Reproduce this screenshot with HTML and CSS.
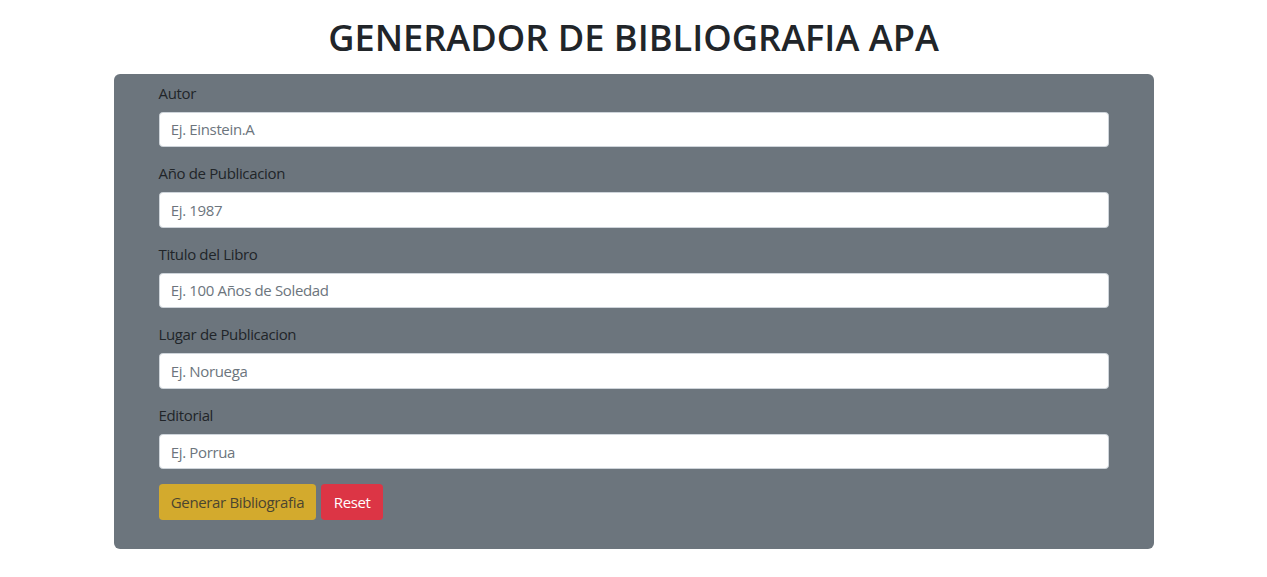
FILE: index.html
```html
<!DOCTYPE html>
<html lang="es">
<head>
<meta charset="utf-8">
<title>Generador de Bibliografia APA</title>
<link rel="stylesheet" href="styles.css">
</head>
<body>
<div class="container">
  <h1 class="title">GENERADOR DE BIBLIOGRAFIA APA</h1>
  <form class="card">
    <div class="form-group">
      <label class="label" for="autor">Autor</label>
      <input class="input" id="autor" type="text" placeholder="Ej. Einstein.A">
    </div>
    <div class="form-group">
      <label class="label" for="anio">Año de Publicacion</label>
      <input class="input" id="anio" type="text" placeholder="Ej. 1987">
    </div>
    <div class="form-group">
      <label class="label" for="titulo">Titulo del Libro</label>
      <input class="input" id="titulo" type="text" placeholder="Ej. 100 Años de Soledad">
    </div>
    <div class="form-group">
      <label class="label" for="lugar">Lugar de Publicacion</label>
      <input class="input" id="lugar" type="text" placeholder="Ej. Noruega">
    </div>
    <div class="form-group">
      <label class="label" for="editorial">Editorial</label>
      <input class="input" id="editorial" type="text" placeholder="Ej. Porrua">
    </div>
    <div class="actions">
      <button type="button" class="btn btn-warning">Generar Bibliografia</button>
      <button type="reset" class="btn btn-danger">Reset</button>
    </div>
  </form>
</div>
</body>
</html>
```
FILE: styles.css
```css
* { box-sizing: border-box; }
html, body { margin: 0; padding: 0; }
body {
  background: #ffffff;
  color: #212529;
  font-family: "Open Sans", "Noto Sans", "Liberation Sans", sans-serif;
  font-size: 15px;
  line-height: 22.5px;
  letter-spacing: -0.35px;
}
.container {
  width: 1040px;
  margin: 0 auto;
  padding-top: 15px;
}
.title {
  margin: 0 0 14px;
  text-align: center;
  font-size: 36.2px;
  line-height: 45px;
  font-weight: 600;
  letter-spacing: 0;
  color: #212529;
}
.card {
  background: #6c757d;
  border-radius: 6px;
  padding: 7.5px 45px 29px;
  display: flex;
  flex-direction: column;
}
.form-group {
  display: flex;
  flex-direction: column;
  margin-bottom: 15px;
}
.label {
  display: block;
  margin-bottom: 7.5px;
  color: #212529;
}
.input {
  height: 35.6px;
  width: 100%;
  padding: 5.6px 11.25px;
  font-family: inherit;
  font-size: 15px;
  line-height: 22.5px;
  letter-spacing: -0.35px;
  color: #495057;
  background: #ffffff;
  border: 1px solid #ced4da;
  border-radius: 3.75px;
  outline: none;
}
.input::placeholder { color: #6c757d; opacity: 1; }
.actions {
  display: flex;
  gap: 5px;
}
.btn {
  height: 35.6px;
  padding: 5.6px 11.25px;
  font-family: inherit;
  font-size: 15px;
  line-height: 22.5px;
  letter-spacing: -0.35px;
  border: 1px solid transparent;
  border-radius: 3.75px;
  cursor: pointer;
}
.btn-warning {
  background: #d3aa2d;
  color: #4b4530;
}
.btn-danger {
  background: #dc3545;
  color: #ffffff;
}
```
